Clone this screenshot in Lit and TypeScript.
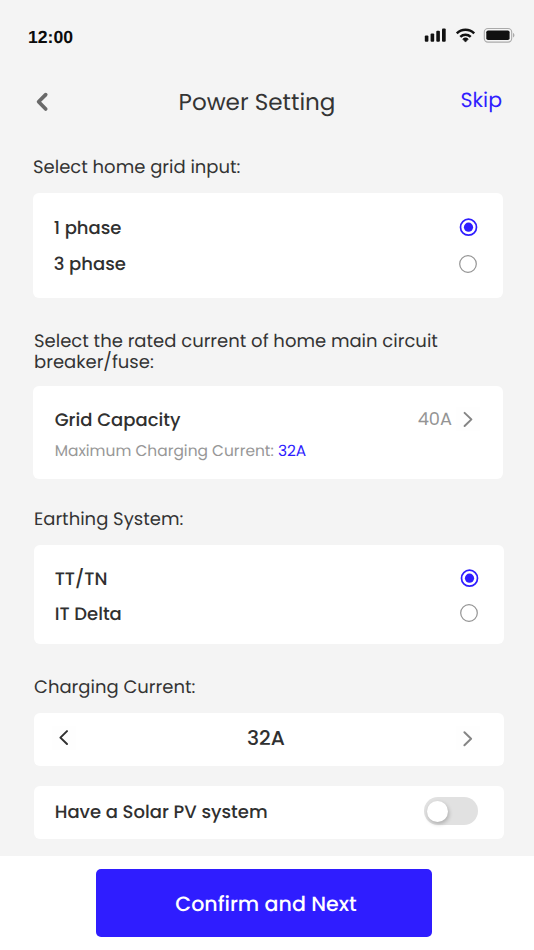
import { LitElement, html, css, svg } from "lit";
import { customElement, property, state } from "lit/decorators.js";
import { classMap } from "lit/directives/class-map.js";

@customElement("radio-dot")
class RadioDot extends LitElement {
  @property({ type: Boolean }) checked = false;
  static styles = css`
    :host { display: block; width: 20px; height: 20px; }
    svg { display: block; }
  `;
  render() {
    return html`<svg width="20" height="20" viewBox="0 0 20 20" fill="none">
      ${this.checked
        ? svg`<circle cx="10.5" cy="10.2" r="8" stroke="#2f1dff" stroke-width="1.7"/><circle cx="10.5" cy="10.2" r="4.6" fill="#2f1dff"/>`
        : svg`<circle cx="10" cy="10" r="8.3" stroke="#949494" stroke-width="1.2"/>`}
    </svg>`;
  }
}

@customElement("app-root")
class AppRoot extends LitElement {
  @state() phase = 0;
  @state() earthing = 0;
  @state() solar = false;
  @state() current = 32;

  static styles = css`
    :host {
      display: flex; flex-direction: column; width: 534px; height: 950px; overflow: hidden;
      box-sizing: border-box; background: #f4f4f4; color: #343434; text-rendering: geometricPrecision;
      font-family: Poppins, Inter, "Liberation Sans", sans-serif; font-size: 18px; line-height: 20px;
    }
    * { box-sizing: border-box; }
    svg { display: block; }
    .status { display: flex; align-items: center; height: 73px; padding: 0 19px 0 28px; }
    .time { flex: 1; font: bold 17.6px/20px "Liberation Sans", sans-serif; color: #0b0b0b; }
    .bar { display: grid; grid-template-columns: 96px 1fr 96px; align-items: center; height: 57px; padding: 0 32px 0 34px; }
    .title { text-align: center; font-size: 23.1px; line-height: 28px; padding: 2px 22px 0 0; }
    .skip { text-align: right; font-size: 20.5px; color: #2f1dff; padding-bottom: 1px; }
    .head { padding: 1px 0 0 34px; white-space: nowrap; }
    .h1 { margin: 27px 0 15.5px; padding-left: 33px; height: 20px; }
    .h2 { margin: 33px 0 14px; line-height: 20.5px; height: 41px; }
    .h3 { margin: 30px 0 16px; height: 20px; }
    .h4 { margin: 33px 0 15.5px; height: 20px; }
    .card { background: #fff; border-radius: 6px; width: 470px; margin-left: 34px; }
    .strong { font-weight: 500; color: #303030; white-space: nowrap; padding-top: 2px; }
    .row { display: flex; align-items: center; justify-content: space-between; }
    .phase { height: 105.5px; margin-left: 33px; padding: 16.5px 25px 0 20.7px; }
    .phase .row { height: 36.5px; }
    .phase .strong { padding-top: 3px; }
    .grid { height: 93px; margin-left: 33px; padding: 18px 23px 0 21.7px; }
    .grid .row { height: 31px; }
    .value { display: flex; align-items: center; gap: 4px; font-size: 17.8px; color: #949494; padding-bottom: 2px; }
    .value span { padding-top: 2px; }
    .note { font-size: 15.45px; line-height: 33px; color: #979797; white-space: nowrap; }
    .note b { font-weight: 400; color: #2f1dff; }
    .earth { height: 99px; padding: 16px 24.7px 0 20.7px; }
    .earth .row { height: 34.5px; }
    .earth .strong { padding-top: 4px; }
    .slim { height: 53px; }
    .amps { padding: 0 24px 2px 18px; }
    .amps .strong { font-size: 20.3px; }
    .solar { margin-top: 20.5px; padding: 0 26px 2px 20.7px; }
    .tile { background: #fefefe; }
    .switch { width: 54px; height: 28px; margin-bottom: 1px; border-radius: 14px; background: #e1e1e1; padding: 4px 2.5px; }
    .switch.on { background: #2f1dff; }
    .knob { width: 21px; height: 21px; border-radius: 50%; background: #fff; box-shadow: 1px 2px 4px rgba(0,0,0,.24); }
    .switch.on .knob { margin-left: 27px; }
    .foot { flex: 1; margin-top: 17px; background: #fff; display: flex; justify-content: center; align-items: flex-start; padding: 12.5px 6px 0 0; }
    .cta { width: 336px; height: 68.5px; border-radius: 5px; background: #2f1dff; color: #fff; display: flex; align-items: center;
      justify-content: center; font-size: 20.6px; font-weight: 500; padding: 4px 0 0 4px; }
  `;

  private options(names: string[], selected: number, pick: (i: number) => void) {
    return names.map((n, i) => html`<div class="row" @click=${() => pick(i)}>
      <span class="strong">${n}</span><radio-dot ?checked=${i === selected}></radio-dot></div>`);
  }

  render() {
    return html`
      <div class="status">
        <span class="time">12:00</span>
        <svg width="91" height="20" viewBox="0 1 91 20">
          <g fill="#111" transform="translate(0 -1.2)">
            <rect x="0.8" y="10.8" width="3.6" height="6.2" rx="1"/><rect x="6.6" y="8.8" width="3.6" height="8.2" rx="1"/>
            <rect x="12.3" y="6" width="3.6" height="11" rx="1"/><rect x="18" y="3.7" width="3.7" height="13.3" rx="1"/>
            <path d="M38.7 14.3a3.8 3.8 0 0 1 5.6 0l-2.8 3z" stroke="#111" stroke-width=".6" stroke-linejoin="round"/>
          </g>
          <path d="M32.8 7.3a12.5 12.5 0 0 1 17.4 0M36.3 10.8a7.6 7.6 0 0 1 10.4 0" fill="none" stroke="#111" stroke-width="2.5"/>
          <rect x="60.3" y="2.5" width="27.4" height="13.6" rx="3.6" fill="none" stroke="#aaa" stroke-width="1.1"/>
          <rect x="62.3" y="4.5" width="23.3" height="9.6" rx="1.8" fill="#111"/>
          <path d="M89 7c1.9.7 1.9 3.7 0 4.4z" fill="#aaa"/>
        </svg>
      </div>
      <div class="bar">
        <svg width="16" height="22" viewBox="0 0 16 22"><path d="M11.7 3.6 4.6 10.8l7.1 7.2" fill="none" stroke="#696969" stroke-width="3.7" stroke-linecap="round" stroke-linejoin="round"/></svg>
        <span class="title">Power Setting</span>
        <span class="skip">Skip</span>
      </div>
      <div class="head h1">Select home grid input:</div>
      <div class="card phase">${this.options(["1 phase", "3 phase"], this.phase, (i) => (this.phase = i))}</div>
      <div class="head h2">Select the rated current of home main circuit<br>breaker/fuse:</div>
      <div class="card grid">
        <div class="row"><span class="strong">Grid Capacity</span>
          <span class="value"><span>40A</span>
            <svg width="24" height="24" viewBox="0 0 24 24" class="tile"><path d="M8.6 5.9 15.4 12.4l-6.8 6.6" fill="none" stroke="#858585" stroke-width="2" stroke-linecap="round" stroke-linejoin="round"/></svg>
          </span></div>
        <div class="note">Maximum Charging Current: <b>32A</b></div>
      </div>
      <div class="head h3">Earthing System:</div>
      <div class="card earth">${this.options(["TT/TN", "IT Delta"], this.earthing, (i) => (this.earthing = i))}</div>
      <div class="head h4">Charging Current:</div>
      <div class="card slim row amps">
        <svg class="tile" width="24" height="24" viewBox="0 0 24 24" @click=${() => this.current--}><path d="M15 5.1 8.4 11.6l6.6 6.4" fill="none" stroke="#303030" stroke-width="2" stroke-linecap="round" stroke-linejoin="round"/></svg>
        <span class="strong">${this.current}A</span>
        <svg class="tile" width="24" height="24" viewBox="0 0 24 24" @click=${() => this.current++}><path d="M8.4 6.2 15.1 12.7l-6.7 6.5" fill="none" stroke="#858585" stroke-width="2" stroke-linecap="round" stroke-linejoin="round"/></svg>
      </div>
      <div class="card slim row solar">
        <span class="strong">Have a Solar PV system</span>
        <div class=${classMap({ switch: true, on: this.solar })} @click=${() => (this.solar = !this.solar)}><div class="knob"></div></div>
      </div>
      <div class="foot"><div class="cta">Confirm and Next</div></div>
    `;
  }
}
